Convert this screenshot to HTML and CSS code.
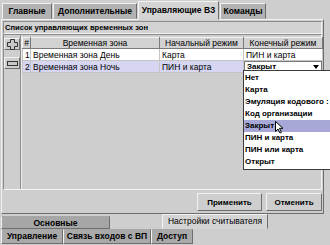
FILE: index.html
```html
<!DOCTYPE html>
<html lang="ru">
<head>
    <meta charset="UTF-8">
    <title>Управляющие ВЗ</title>
    <link rel="stylesheet" href="styles.css">
</head>
<body>

<div class="window">
    <div class="tabs top-tabs">
        <div class="tab t-main">Главные</div>
        <div class="tab t-extra">Дополнительные</div>
        <div class="tab t-zones active">Управляющие ВЗ</div>
        <div class="tab t-cmd">Команды</div>
    </div>

    <div class="page">
        <div class="group-title">Список управляющих временных зон</div>

        <div class="group-body">
            <div class="side-buttons">
                <button class="icon-btn" title="Добавить">
                    <svg width="11" height="11" viewBox="0 0 11 11">
                        <path d="M3.5 0.5h4v3h3v4h-3v3h-4v-3h-3v-4h3z" fill="#c8c8c8" stroke="#333" stroke-width="1"/>
                    </svg>
                </button>
                <button class="icon-btn" title="Удалить">
                    <svg width="11" height="11" viewBox="0 0 11 11">
                        <rect x="0.5" y="3.5" width="10" height="4" fill="#c8c8c8" stroke="#333" stroke-width="1"/>
                    </svg>
                </button>
            </div>

            <div class="grid-area">
                <table class="zones">
                    <thead>
                        <tr>
                            <th class="c-num">#</th>
                            <th class="c-name">Временная зона</th>
                            <th class="c-start">Начальный режим</th>
                            <th class="c-end">Конечный режим</th>
                        </tr>
                    </thead>
                    <tbody>
                        <tr>
                            <td>1</td>
                            <td>Временная зона День</td>
                            <td>Карта</td>
                            <td>ПИН и карта</td>
                        </tr>
                        <tr class="selected">
                            <td>2</td>
                            <td>Временная зона Ночь</td>
                            <td>ПИН и карта</td>
                            <td class="combo-cell">
                                <div class="combo">
                                    <span>Закрыт</span>
                                    <span class="arrow"></span>
                                </div>
                            </td>
                        </tr>
                    </tbody>
                </table>
            </div>
        </div>

        <div class="actions">
            <button class="btn btn-apply">Применить</button>
            <button class="btn btn-cancel">Отменить</button>
        </div>
    </div>

    <div class="bottom-tabs">
        <div class="tab-row row-upper">
            <div class="tab b-basic">Основные</div>
            <div class="tab b-reader active">Настройки считывателя</div>
        </div>
        <div class="tab-row row-lower">
            <div class="tab b-control">Управление</div>
            <div class="tab b-inputs">Связь входов с ВП</div>
            <div class="tab b-access">Доступ</div>
        </div>
    </div>

    <!-- open list of the combo box -->
    <ul class="dropdown">
        <li>Нет</li>
        <li>Карта</li>
        <li>Эмуляция кодового :</li>
        <li>Код организации</li>
        <li class="hover">Закрыт</li>
        <li>ПИН и карта</li>
        <li>ПИН или карта</li>
        <li>Открыт</li>
    </ul>

    <svg class="cursor" width="9" height="13" viewBox="0 0 9 13">
        <path d="M0.5 0.5v10l2.5-2.5 2 4 1.5-0.7-2-4h3.5z" fill="#fff" stroke="#000" stroke-width="1"/>
    </svg>
</div>

</body>
</html>
```

FILE: styles.css
```css
* {
    box-sizing: border-box;
}

body {
    margin: 0;
    background-color: #cecece;
    font-family: "Liberation Sans", Arial, sans-serif;
    font-size: 8.5px;
    color: #000;
}

.window {
    position: relative;
    width: 330px;
    height: 245px;
    overflow: hidden;
    background-color: #cecece;
}

/* tabs */
.tabs {
    display: flex;
}

.tab {
    font-weight: bold;
    background-color: #b2b2b2;
    white-space: nowrap;
    text-align: center;
}

.top-tabs {
    height: 19px;
    padding-left: 2px;
    align-items: flex-end;
}

.top-tabs .tab {
    height: 16px;
    line-height: 14px;
    border: 1px solid;
    border-color: #f2f2f2 #6e6e6e transparent #f2f2f2;
    margin-right: 1px;
}

.top-tabs .tab.active {
    height: 19px;
    line-height: 16px;
    background-color: #d4d4d4;
    margin-bottom: -1px;
    position: relative;
}

.t-main { width: 50px; }
.t-extra { width: 84px; }
.t-zones { width: 81px; }
.t-cmd { width: 46px; }

/* page */
.page {
    height: 195px;
    margin: 0 6px 0 1px;
    border: 1px solid;
    border-color: #f2f2f2 #6e6e6e #6e6e6e #f2f2f2;
    padding: 0 1px;
}

.group-title {
    height: 13px;
    line-height: 11px;
    margin-top: 1px;
    padding-left: 1px;
    font-weight: bold;
    font-size: 7.6px;
    border: 1px solid;
    border-color: #8c8c8c #f2f2f2 #f2f2f2 #8c8c8c;
    background-color: #d2d2d2;
}

.group-body {
    display: flex;
    height: 156px;
    border: 1px solid;
    border-color: #8c8c8c #f2f2f2 #f2f2f2 #8c8c8c;
}

.side-buttons {
    width: 19px;
    display: flex;
    flex-direction: column;
    align-items: center;
    gap: 7px;
    padding-top: 3px;
    border-right: 1px solid #8c8c8c;
    box-shadow: 1px 0 0 #ececec;
}

.icon-btn {
    width: 16px;
    height: 12px;
    padding: 0;
    display: flex;
    align-items: center;
    justify-content: center;
    background-color: #cecece;
    border: 1px solid;
    border-color: #f2f2f2 #6e6e6e #6e6e6e #f2f2f2;
}

.grid-area {
    flex: 1;
    padding: 2px 0 0 1px;
}

.zones {
    border-collapse: collapse;
    table-layout: fixed;
    width: 300px;
}

.zones th,
.zones td {
    height: 11px;
    padding: 0 2px;
    white-space: nowrap;
    overflow: hidden;
    font-size: 8.5px;
    line-height: 10px;
}

.zones th {
    font-weight: normal;
    background-color: #d2d2d2;
    border: 1px solid;
    border-color: #f2f2f2 #7a7a7a #7a7a7a #f2f2f2;
    text-align: center;
}

.zones td {
    height: 12px;
    background-color: #fff;
    border: 1px solid #c4c4c4;
}

.zones tr.selected td {
    background-color: #d6d6f2;
}

.c-num { width: 8px; }
.c-name { width: 129px; }
.c-start { width: 84px; }
.c-end { width: 79px; }

.zones th.c-num {
    padding: 0;
}

.zones .combo-cell {
    padding: 0;
}

.combo {
    display: flex;
    justify-content: space-between;
    align-items: center;
    height: 11px;
    padding: 0 2px;
    background-color: #fff;
    font-weight: bold;
    font-size: 8px;
    border: 1px solid #7a7a7a;
}

.arrow {
    width: 0;
    height: 0;
    border-left: 3px solid transparent;
    border-right: 3px solid transparent;
    border-top: 4px solid #000;
}

/* buttons */
.actions {
    display: flex;
    justify-content: flex-end;
    gap: 4px;
    padding: 3px 0 0 0;
}

.btn {
    height: 18px;
    padding: 0;
    font-family: inherit;
    font-size: 8px;
    font-weight: bold;
    background-color: #cecece;
    border: 1px solid;
    border-color: #f2f2f2 #6e6e6e #6e6e6e #f2f2f2;
}

.btn-apply { width: 65px; }
.btn-cancel { width: 56px; }

/* bottom tabs */
.tab-row {
    display: flex;
}

.bottom-tabs .tab {
    border: 1px solid;
    border-color: transparent #6e6e6e #6e6e6e #f2f2f2;
    line-height: 12px;
}

.row-upper {
    height: 15px;
    padding-left: 1px;
    gap: 52px;
}

.row-upper .tab {
    height: 13px;
    margin-top: 2px;
    background-color: #a6a6a6;
}

.row-upper .tab.active {
    height: 15px;
    margin-top: 0;
    background-color: #d4d4d4;
    font-weight: normal;
    border-color: #f2f2f2 #6e6e6e transparent #f2f2f2;
}

.row-lower {
    height: 15px;
    padding-left: 1px;
}

.row-lower .tab {
    height: 15px;
    background-color: #a9a9a9;
}

.b-basic { width: 109px; }
.b-reader { width: 106px; }
.b-control { width: 62px; }
.b-inputs { width: 88px; }
.b-access { width: 42px; }

/* open combo list */
.dropdown {
    position: absolute;
    left: 243px;
    top: 70px;
    width: 87px;
    margin: 0;
    padding: 1px 0;
    list-style: none;
    background-color: #fff;
    border: 1px solid #3c3c3c;
    border-right: none;
}

.dropdown li {
    height: 12px;
    line-height: 12px;
    padding-left: 1px;
    font-size: 8px;
    font-weight: bold;
    white-space: nowrap;
}

.dropdown li.hover {
    background-color: #a8a8d8;
}

.cursor {
    position: absolute;
    left: 275px;
    top: 121px;
}
```
